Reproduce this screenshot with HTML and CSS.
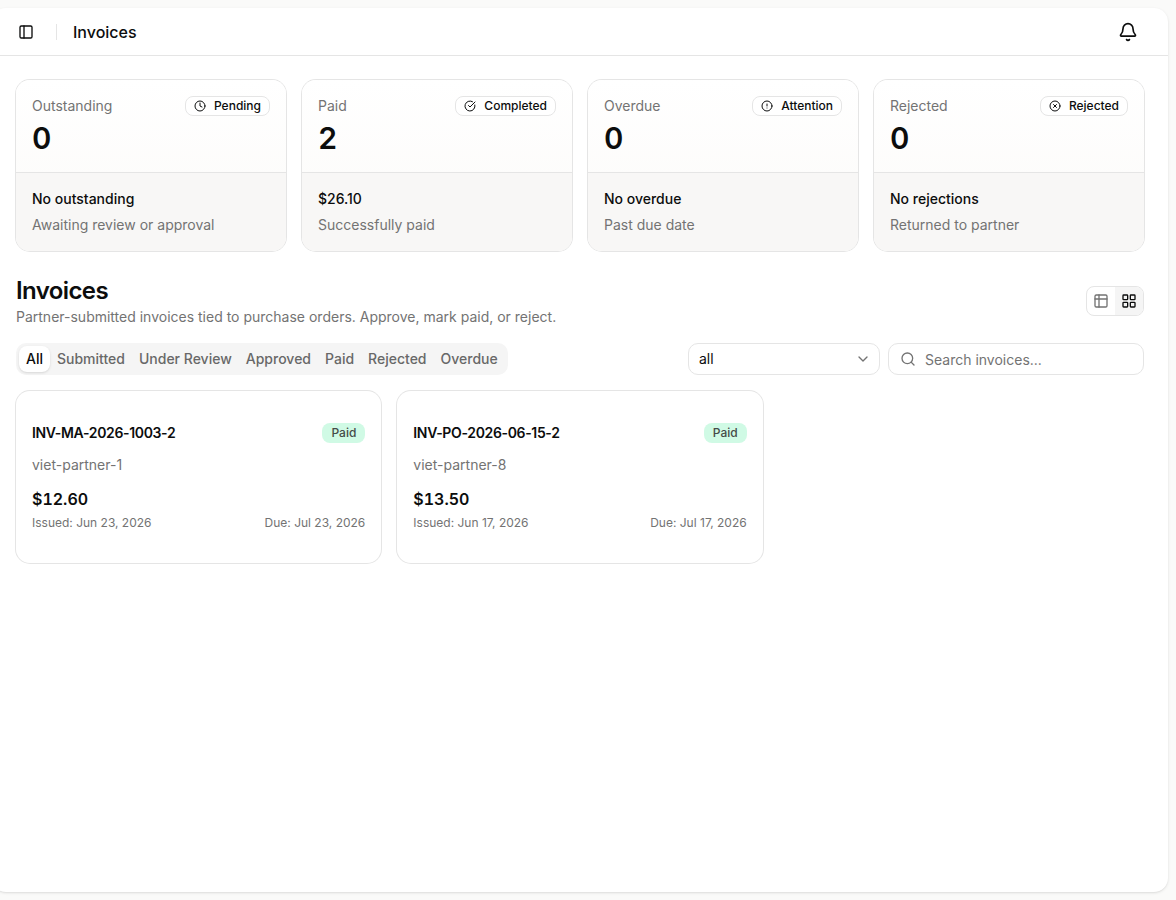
FILE: index.html
```html
<!DOCTYPE html>
<html lang="en">
<head>
  <meta charset="UTF-8">
  <meta name="viewport" content="width=device-width, initial-scale=1.0">
  <title>Invoices</title>
  <link rel="stylesheet" href="styles.css">
</head>
<body>
  <main class="panel">
    <header class="topbar">
      <button class="icon-button" aria-label="Toggle sidebar">
        <svg class="icon" viewBox="0 0 24 24"><rect x="3" y="3" width="18" height="18" rx="2"/><path d="M9 3v18"/></svg>
      </button>
      <span class="divider"></span>
      <span class="topbar-title">Invoices</span>
      <button class="icon-button bell" aria-label="Notifications">
        <svg class="icon icon-lg" viewBox="0 0 24 24"><path d="M10.268 21a2 2 0 0 0 3.464 0"/><path d="M3.262 15.326A1 1 0 0 0 4 17h16a1 1 0 0 0 .74-1.673C19.41 13.956 18 12.499 18 8A6 6 0 0 0 6 8c0 4.499-1.411 5.956-2.738 7.326"/></svg>
      </button>
    </header>

    <div class="content">
      <section class="stats">
        <div class="card stat">
          <div class="stat-head">
            <div class="row">
              <span class="muted">Outstanding</span>
              <span class="badge"><svg class="icon icon-sm" viewBox="0 0 24 24"><circle cx="12" cy="12" r="10"/><path d="M12 6v6l4 2"/></svg>Pending</span>
            </div>
            <div class="stat-value">0</div>
          </div>
          <div class="stat-foot">
            <div class="strong">No outstanding</div>
            <div class="muted">Awaiting review or approval</div>
          </div>
        </div>

        <div class="card stat">
          <div class="stat-head">
            <div class="row">
              <span class="muted">Paid</span>
              <span class="badge"><svg class="icon icon-sm" viewBox="0 0 24 24"><path d="M21.801 10A10 10 0 1 1 17 3.335"/><path d="m9 11 3 3L22 4"/></svg>Completed</span>
            </div>
            <div class="stat-value">2</div>
          </div>
          <div class="stat-foot">
            <div class="strong">$26.10</div>
            <div class="muted">Successfully paid</div>
          </div>
        </div>

        <div class="card stat">
          <div class="stat-head">
            <div class="row">
              <span class="muted">Overdue</span>
              <span class="badge"><svg class="icon icon-sm" viewBox="0 0 24 24"><circle cx="12" cy="12" r="10"/><path d="M12 8v4M12 16h.01"/></svg>Attention</span>
            </div>
            <div class="stat-value">0</div>
          </div>
          <div class="stat-foot">
            <div class="strong">No overdue</div>
            <div class="muted">Past due date</div>
          </div>
        </div>

        <div class="card stat">
          <div class="stat-head">
            <div class="row">
              <span class="muted">Rejected</span>
              <span class="badge"><svg class="icon icon-sm" viewBox="0 0 24 24"><circle cx="12" cy="12" r="10"/><path d="m15 9-6 6M9 9l6 6"/></svg>Rejected</span>
            </div>
            <div class="stat-value">0</div>
          </div>
          <div class="stat-foot">
            <div class="strong">No rejections</div>
            <div class="muted">Returned to partner</div>
          </div>
        </div>
      </section>

      <section class="invoices">
        <div class="row">
          <div>
            <h1>Invoices</h1>
            <p class="muted">Partner-submitted invoices tied to purchase orders. Approve, mark paid, or reject.</p>
          </div>
          <div class="view-toggle">
            <button aria-label="Table view"><svg class="icon" viewBox="0 0 24 24"><rect x="3" y="3" width="18" height="18" rx="2"/><path d="M3 9h18M9 3v18"/></svg></button>
            <button class="active" aria-label="Grid view"><svg class="icon" viewBox="0 0 24 24"><rect x="3" y="3" width="7" height="7" rx="1"/><rect x="14" y="3" width="7" height="7" rx="1"/><rect x="14" y="14" width="7" height="7" rx="1"/><rect x="3" y="14" width="7" height="7" rx="1"/></svg></button>
          </div>
        </div>

        <div class="row">
          <div class="tabs">
            <button class="tab active">All</button>
            <button class="tab">Submitted</button>
            <button class="tab">Under Review</button>
            <button class="tab">Approved</button>
            <button class="tab">Paid</button>
            <button class="tab">Rejected</button>
            <button class="tab">Overdue</button>
          </div>
          <div class="filters">
            <button class="select">all<svg class="icon" viewBox="0 0 24 24"><path d="m6 9 6 6 6-6"/></svg></button>
            <label class="search">
              <svg class="icon" viewBox="0 0 24 24"><circle cx="11" cy="11" r="8"/><path d="m21 21-4.3-4.3"/></svg>
              <input type="text" placeholder="Search invoices...">
            </label>
          </div>
        </div>

        <div class="invoice-grid">
          <article class="card invoice">
            <div class="row">
              <span class="invoice-number">INV-MA-2026-1003-2</span>
              <span class="status">Paid</span>
            </div>
            <div class="muted">viet-partner-1</div>
            <div>
              <div class="amount">$12.60</div>
              <div class="row dates"><span>Issued: Jun 23, 2026</span><span>Due: Jul 23, 2026</span></div>
            </div>
          </article>
          <article class="card invoice">
            <div class="row">
              <span class="invoice-number">INV-PO-2026-06-15-2</span>
              <span class="status">Paid</span>
            </div>
            <div class="muted">viet-partner-8</div>
            <div>
              <div class="amount">$13.50</div>
              <div class="row dates"><span>Issued: Jun 17, 2026</span><span>Due: Jul 17, 2026</span></div>
            </div>
          </article>
        </div>
      </section>
    </div>
  </main>
</body>
</html>
```
FILE: styles.css
```css
:root {
  --background: #ffffff;
  --page: #fafaf9;
  --text: #0c0d0d;
  --muted: #737373;
  --accent: #f5f5f5;
  --border: #e5e5e5;
}

* {
  box-sizing: border-box;
}

body {
  background: var(--page);
  color: var(--text);
  font-family: Inter, sans-serif;
  font-size: 14px;
  line-height: 20px;
  margin: 0;
  height: 900px;
  padding: 8px 8px 8px 0;
  overflow: hidden;
}

button,
input {
  font: inherit;
  color: inherit;
  background: none;
  border: none;
  padding: 0;
}

h1,
p {
  margin: 0;
}

.panel {
  height: 884px;
  margin-left: -8px;
  background: var(--background);
  border-radius: 14px;
  box-shadow: 0 1px 3px rgba(0, 0, 0, 0.1), 0 1px 2px -1px rgba(0, 0, 0, 0.1);
}

.topbar {
  display: flex;
  align-items: center;
  height: 48px;
  padding: 0 24px;
  border-bottom: 1px solid var(--border);
}

.icon-button {
  display: flex;
  align-items: center;
  justify-content: center;
  width: 20px;
  height: 28px;
}

.bell {
  width: 32px;
  margin-left: auto;
}

.divider {
  width: 1px;
  height: 16px;
  margin: 0 16px 0 20px;
  background: var(--border);
}

.topbar-title {
  font-size: 16px;
  font-weight: 500;
}

.icon {
  width: 16px;
  height: 16px;
  flex-shrink: 0;
  fill: none;
  stroke: currentColor;
  stroke-width: 2;
  stroke-linecap: round;
  stroke-linejoin: round;
}

.icon-lg {
  width: 20px;
  height: 20px;
}

.icon-sm {
  width: 12px;
  height: 12px;
}

.content {
  padding: 24px;
}

.row {
  display: flex;
  align-items: center;
  justify-content: space-between;
}

.muted {
  color: var(--muted);
}

.strong {
  font-weight: 500;
}

.stats {
  display: grid;
  grid-template-columns: repeat(4, 1fr);
  gap: 16px;
}

.card {
  border-radius: 14px;
  box-shadow: 0 0 0 1px var(--border);
}

.stat {
  overflow: hidden;
  background: linear-gradient(to top, #fbfaf8, #ffffff);
}

.stat-head {
  padding: 16px;
}

.badge {
  display: flex;
  align-items: center;
  gap: 8px;
  height: 20px;
  padding: 0 8px;
  border: 1px solid var(--border);
  border-radius: 8px;
  background: var(--background);
  font-size: 12px;
  font-weight: 500;
}

.stat-value {
  margin-top: 4px;
  font-size: 30px;
  font-weight: 600;
  line-height: 36px;
  font-variant-numeric: tabular-nums;
}

.stat-foot {
  display: grid;
  gap: 6px;
  padding: 16px;
  border-top: 1px solid var(--border);
  background: #f8f7f6;
}

.invoices {
  display: grid;
  gap: 16px;
  margin-top: 24px;
}

h1 {
  font-size: 24px;
  font-weight: 600;
  line-height: 32px;
  letter-spacing: -0.6px;
}

.view-toggle {
  display: flex;
  height: 30px;
  border: 1px solid var(--border);
  border-radius: 8px;
  overflow: hidden;
}

.view-toggle button {
  display: flex;
  align-items: center;
  justify-content: center;
  width: 28px;
  color: var(--muted);
}

.view-toggle .active {
  background: var(--accent);
  color: var(--text);
}

.tabs {
  display: flex;
  align-items: center;
  height: 32px;
  padding: 3px;
  border-radius: 10px;
  background: var(--accent);
}

.tab {
  height: 26px;
  padding: 0 7px;
  border-radius: 8px;
  color: #686868;
  font-weight: 500;
}

.tab.active {
  background: var(--background);
  color: var(--text);
  box-shadow: 0 1px 3px rgba(0, 0, 0, 0.1), 0 1px 2px -1px rgba(0, 0, 0, 0.1);
}

.filters {
  display: flex;
  gap: 8px;
}

.select,
.search {
  display: flex;
  align-items: center;
  height: 32px;
  border: 1px solid var(--border);
  border-radius: 10px;
}

.select {
  justify-content: space-between;
  width: 192px;
  padding: 0 8px 0 10px;
}

.select .icon,
.search .icon {
  color: var(--muted);
}

.search {
  width: 256px;
  gap: 9px;
  padding: 0 11px;
}

.search input {
  width: 100%;
  padding-top: 2px;
  outline: none;
}

.search input::placeholder {
  color: var(--muted);
}

.invoice-grid {
  display: grid;
  grid-template-columns: repeat(3, 1fr);
  gap: 16px;
}

.invoice {
  display: grid;
  gap: 12px;
  padding: 32px 16px;
}

.invoice-number {
  font-weight: 600;
  letter-spacing: -0.35px;
}

.status {
  height: 20px;
  padding: 0 9px;
  border-radius: 8px;
  background: #d0fae5;
  color: #454b48;
  font-size: 12px;
  font-weight: 500;
}

.amount {
  font-size: 16px;
  font-weight: 600;
  line-height: 24px;
  font-variant-numeric: tabular-nums;
}

.dates {
  margin-top: 4px;
  color: var(--muted);
  font-size: 12px;
  line-height: 16px;
}
```
